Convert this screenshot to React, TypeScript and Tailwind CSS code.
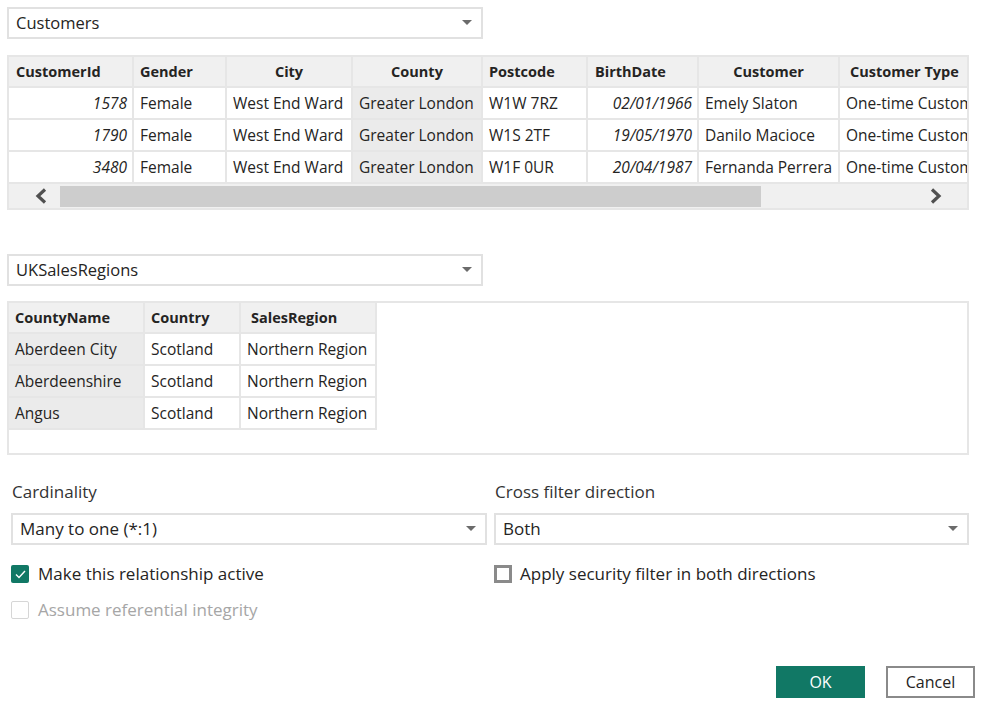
const customerCols = [
  { label: "CustomerId", w: "w-[123px]", align: "text-left pl-[7px]" },
  { label: "Gender", w: "w-[91px]", align: "text-left pl-[6px]" },
  { label: "City", w: "w-[124px]", align: "text-center" },
  { label: "County", w: "w-[128px]", align: "text-center" },
  { label: "Postcode", w: "w-[103px]", align: "text-left pl-[6px]" },
  { label: "BirthDate", w: "w-[109px]", align: "text-left pl-[7px]" },
  { label: "Customer", w: "w-[139px]", align: "text-center" },
  { label: "Customer Type", w: "w-[129px]", align: "text-left pl-[10px]" },
];

const customerRows = [
  ["1578", "Female", "West End Ward", "Greater London", "W1W 7RZ", "02/01/1966", "Emely Slaton", "One-time Customer"],
  ["1790", "Female", "West End Ward", "Greater London", "W1S 2TF", "19/05/1970", "Danilo Macioce", "One-time Customer"],
  ["3480", "Female", "West End Ward", "Greater London", "W1F 0UR", "20/04/1987", "Fernanda Perrera", "One-time Customer"],
];

const regionCols = [
  { label: "CountyName", w: "w-[134px]", align: "text-left pl-[6px]" },
  { label: "Country", w: "w-[94px]", align: "text-left pl-[6px]" },
  { label: "SalesRegion", w: "w-[134px]", align: "text-left pl-[10px]" },
];

const regionRows = [
  ["Aberdeen City", "Scotland", "Northern Region"],
  ["Aberdeenshire", "Scotland", "Northern Region"],
  ["Angus", "Scotland", "Northern Region"],
];

function Caret() {
  return (
    <svg width="10" height="6" viewBox="0 0 10 6" className="shrink-0">
      <path d="M0 0 L10 0 L5 5 Z" fill="#6b6b6b" />
    </svg>
  );
}

function Select({ value, className = "" }: { value: string; className?: string }) {
  return (
    <div
      className={`flex h-[32px] items-center justify-between border-2 border-[#e1e1e1] bg-white pl-[7px] pr-[9px] text-[16.5px] text-[#252423] ${className}`}
    >
      <span>{value}</span>
      <Caret />
    </div>
  );
}

function Chevron({ dir }: { dir: "left" | "right" }) {
  return (
    <svg width="14" height="16" viewBox="0 0 14 16">
      {dir === "left" ? (
        <path d="M11 1.5 L4 8 L11 14.5" fill="none" stroke="#505050" strokeWidth="3.2" />
      ) : (
        <path d="M3 1.5 L10 8 L3 14.5" fill="none" stroke="#505050" strokeWidth="3.2" />
      )}
    </svg>
  );
}

function Checkbox({ state }: { state: "checked" | "disabled" | "empty" }) {
  if (state === "checked") {
    return (
      <span className="flex h-[18px] w-[18px] shrink-0 items-center justify-center rounded-[2px] bg-[#117865]">
        <svg width="11" height="9" viewBox="0 0 11 9">
          <path d="M1 4.5 L4 7.5 L10 1" fill="none" stroke="white" strokeWidth="1.4" />
        </svg>
      </span>
    );
  }
  if (state === "disabled") {
    return <span className="h-[18px] w-[18px] shrink-0 rounded-[2px] border border-[#d6d6d6] bg-white" />;
  }
  return <span className="h-[18px] w-[18px] shrink-0 border-[3px] border-[#8a8a8a] bg-white" />;
}

export default function App() {
  return (
    <div
      className="h-[706px] w-[982px] bg-white px-[7px] pt-[7px] text-[#252423]"
      style={{ fontFamily: '"Open Sans", "Noto Sans", sans-serif' }}
    >
      <Select value="Customers" className="w-[476px]" />

      {/* Customers preview */}
      <div className="mt-[16px] w-[962px] overflow-hidden border-2 border-[#e6e6e6] bg-[#e6e6e6]">
        <div className="flex flex-col gap-[2px]">
          <div className="flex gap-[2px]">
            {customerCols.map((c) => (
              <div
                key={c.label}
                className={`${c.w} h-[29px] shrink-0 overflow-hidden whitespace-nowrap bg-[#f0f0f0] text-[14.5px] font-bold leading-[29px] ${c.align}`}
              >
                {c.label}
              </div>
            ))}
          </div>
          {customerRows.map((row, r) => (
            <div key={r} className="flex gap-[2px]">
              {row.map((v, i) => {
                const col = customerCols[i];
                const base = `${col.w} h-[30px] shrink-0 overflow-hidden whitespace-nowrap text-[15.5px] leading-[30px]`;
                if (i === 0 || i === 5)
                  return (
                    <div key={i} className={`${base} bg-white pr-[5px] text-right italic`}>
                      {v}
                    </div>
                  );
                if (i === 3)
                  return (
                    <div key={i} className={`${base} bg-[#ebebeb] pl-[6px]`}>
                      {v}
                    </div>
                  );
                return (
                  <div key={i} className={`${base} bg-white pl-[6px]`}>
                    {v}
                  </div>
                );
              })}
            </div>
          ))}
          <div className="flex h-[24px] items-center bg-[#f0f0f0]">
            <div className="flex w-[51px] justify-center pl-[12px]">
              <Chevron dir="left" />
            </div>
            <div className="h-[21px] w-[701px] bg-[#cdcdcd]" />
            <div className="flex flex-1 justify-end pr-[24px]">
              <Chevron dir="right" />
            </div>
          </div>
        </div>
      </div>

      <Select value="UKSalesRegions" className="mt-[44px] w-[476px]" />

      {/* UKSalesRegions preview */}
      <div className="mt-[15px] h-[154px] w-[962px] border-2 border-[#e6e6e6] bg-white">
        <div className="inline-flex flex-col gap-[2px] bg-[#e6e6e6] pr-[2px] pb-[2px]">
          <div className="flex gap-[2px]">
            {regionCols.map((c) => (
              <div
                key={c.label}
                className={`${c.w} h-[29px] whitespace-nowrap bg-[#f0f0f0] text-[14.5px] font-bold leading-[29px] ${c.align}`}
              >
                {c.label}
              </div>
            ))}
          </div>
          {regionRows.map((row, r) => (
            <div key={r} className="flex gap-[2px]">
              {row.map((v, i) => (
                <div
                  key={i}
                  className={`${regionCols[i].w} h-[30px] whitespace-nowrap pl-[6px] text-[15.5px] leading-[30px] ${
                    i === 0 ? "bg-[#ebebeb]" : "bg-white"
                  }`}
                >
                  {v}
                </div>
              ))}
            </div>
          ))}
        </div>
      </div>

      {/* Relationship options */}
      <div className="mt-[26px] grid grid-cols-[480px_475px] gap-x-[7px]">
        <div className="pl-[4px]">
          <div className="h-[22px] pl-[1px] text-[17px] leading-[22px] text-[#333]">Cardinality</div>
          <Select value="Many to one (*:1)" className="mt-[10px] w-[476px] text-[17px]" />
          <label className="mt-[17px] flex h-[24px] items-center gap-[9px] text-[17px]">
            <Checkbox state="checked" />
            <span>Make this relationship active</span>
          </label>
          <label className="mt-[12px] flex h-[24px] items-center gap-[9px] text-[17px] text-[#a6a6a6]">
            <Checkbox state="disabled" />
            <span>Assume referential integrity</span>
          </label>
        </div>
        <div>
          <div className="h-[22px] pl-[1px] text-[17px] leading-[22px] text-[#333]">Cross filter direction</div>
          <Select value="Both" className="mt-[10px] w-[475px] text-[17px]" />
          <label className="mt-[17px] flex h-[24px] items-center gap-[8px] text-[17px]">
            <Checkbox state="empty" />
            <span>Apply security filter in both directions</span>
          </label>
        </div>
      </div>

      <div className="mt-[44px] flex justify-end gap-[21px]">
        <button className="h-[32px] w-[89px] bg-[#117865] text-[16px] text-white">OK</button>
        <button className="h-[32px] w-[89px] border-2 border-[#8a8a8a] bg-white text-[16px] text-[#252423]">
          Cancel
        </button>
      </div>
    </div>
  );
}
